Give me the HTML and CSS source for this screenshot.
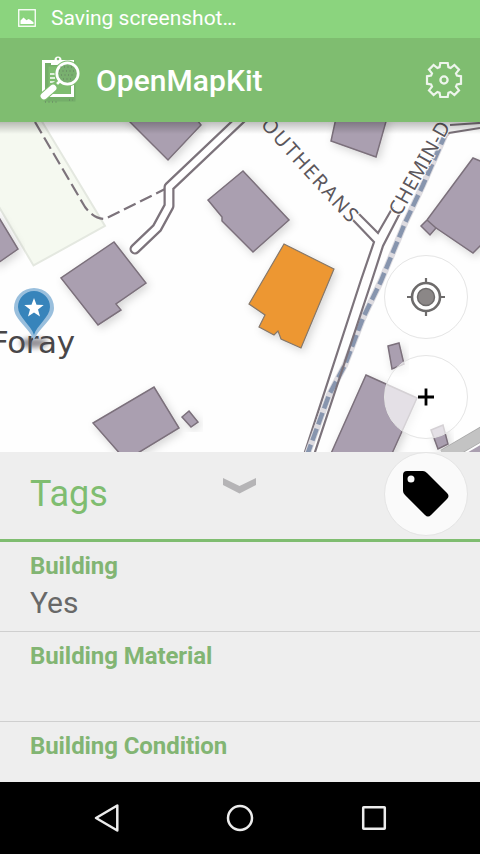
FILE: index.html
```html
<!DOCTYPE html>
<html lang="en">
<head>
<meta charset="utf-8">
<title>OpenMapKit</title>
<link rel="stylesheet" href="styles.css">
</head>
<body>
<div class="screen">
  <div class="status">
    <svg width="18" height="18" viewBox="0 0 18 18"><rect x=".75" y=".75" width="16.5" height="16.5" fill="none" stroke="#fff" stroke-width="1.3"/><path d="M2.5 15v-3.5L5.5 8.500l3 2.700 2-1.200 2 1 3 2.200V15z" fill="#fff"/></svg>
    <span class="status-text">Saving screenshot…</span>
  </div>
  <header class="appbar">
    <svg class="logo" width="44" height="54" viewBox="38 52 44 54">
      <path d="M46 63h27v35H46z" fill="none" stroke="#4d7351" stroke-opacity=".2" stroke-width="5"/>
      <path d="M43.500 60.500h29V94.500H43.500z" fill="none" stroke="#fff" stroke-width="3"/>
      <path d="M51 59h3.500a3.500 3.500 0 1 1 7 0H65v5H51z" fill="#fff"/>
      <circle cx="58" cy="58" r="1.300" fill="#7fbd70"/>
      <path d="M50 73h6M50 77h5M50 81h5" stroke="#fff" stroke-width="1.500"/>
      <path d="M61 79l-7 7" stroke="#7fbd70" stroke-width="7"/>
      <circle cx="67.500" cy="72.500" r="13" fill="#7fbd70"/>
      <circle cx="67.500" cy="72.500" r="10.700" fill="#79b06f" stroke="#fff" stroke-width="2.700"/>
      <path d="M60.500 66h14M59 70h16M61 74h13M63 78h8" stroke="#637a61" stroke-width="1" stroke-dasharray="1 2.500"/>
      <path d="M60 80l-5 5" stroke="#fff" stroke-width="2.500"/>
      <path d="M54 86L43.500 95.500" stroke="#7fbd70" stroke-width="9" stroke-linecap="round"/>
      <path d="M53 87L44 95" stroke="#fff" stroke-width="6.800" stroke-linecap="round"/>
      <path d="M45 101h13M69 99h4" stroke="#637a61" stroke-width="1" stroke-dasharray="1 2.500"/>
    </svg>
    <h1 class="app-title">OpenMapKit</h1>
    <svg class="gear" width="38" height="38" viewBox="-19 -19 38 38" fill="none" stroke="#eef5ec" stroke-width="2.200">
      <path d="M-3.700-17H3.700L4.400-12.900 6.600-12 10.400-15 15-10.400 12-6.600 12.900-4.400 17-3.700V3.700L12.900 4.400 12 6.600 15 10.400 10.400 15 6.600 12 4.400 12.900 3.700 17H-3.700L-4.400 12.900-6.600 12-10.400 15-15 10.400-12 6.600-12.900 4.400-17 3.700V-3.700L-12.900-4.400-12-6.600-15-10.400-10.400-15-6.600-12-4.400-12.900z"/>
      <circle r="3.600" stroke-width="2.300"/>
    </svg>
  </header>
  <main class="map">
    <svg class="map-canvas" width="480" height="330" viewBox="0 122 480 330">
      <defs>
        <filter id="shade" x="-30%" y="-30%" width="160%" height="160%"><feDropShadow dx="2.500" dy="3" stdDeviation="4.500" flood-color="#000" flood-opacity=".16"/></filter>
        <filter id="soft" x="-50%" y="-50%" width="200%" height="200%"><feGaussianBlur stdDeviation="2.500"/></filter>
        <linearGradient id="fade" x1="0" y1="0" x2="0" y2="1"><stop offset="0" stop-color="#000" stop-opacity=".25"/><stop offset="1" stop-color="#000" stop-opacity="0"/></linearGradient>
        <path id="road-a" d="M260 125Q306 177 350 224"/>
        <path id="road-b" d="M400 217L460 110"/>
      </defs>
      <path d="M-5 200V110H35L105 226 33.500 265.500z" fill="#f5f9f0" stroke="#e4e8e0" stroke-width="2"/>
      <g fill="none" stroke="#7c737b" stroke-width="2.200">
        <path d="M35 122L85 207Q94 219 105 219L165 189" stroke-dasharray="13 5"/>
        <path d="M246 114L169 187V206L157 228 135 249" stroke-width="11" stroke-linecap="round" stroke-linejoin="round"/>
        <path d="M246 114L169 187V206L157 228 135 249" stroke="#fff" stroke-width="6.500" stroke-linecap="round" stroke-linejoin="round"/>
        <path d="M352 219L374 242 361 280 303 458M357 212L378 233 393 207"/>
        <path d="M480 123L450 125M480 128L449 133L444 139"/>
      </g>
      <path d="M446 133L423 185 405 223 381 281 363 318 345 365 329 395 306 458" fill="none" stroke="#dddbe0" stroke-width="6.500"/>
      <path d="M446 133L423 185 405 223 381 281 363 318 345 365 329 395 306 458" fill="none" stroke="#8795ae" stroke-width="4.500" stroke-dasharray="12.500 4.500"/>
      <path d="M400 213L383 246 372 280 313 458" fill="none" stroke="#7c737b" stroke-width="2.200"/>
      <g fill="#aa9fb0" stroke="#7b707b" stroke-width="1.500">
        <path filter="url(#shade)" d="M124 116L168 160 201 125 194 116z"/>
        <path filter="url(#shade)" d="M336 118L331 141 376 157 387 118z"/>
        <path filter="url(#shade)" d="M243 171L289 220 253 252 222 221V217L208 200z"/>
        <path filter="url(#shade)" d="M-5 211L18 249-5 265z"/>
        <path filter="url(#shade)" d="M114 242L146 283 116 304 121 310 98 325 61 278z"/>
        <path filter="url(#shade)" d="M154 387L179 428 133 456H122L93 423z"/>
        <path filter="url(#shade)" d="M189 411L198 422 191 427 182 417z"/>
        <path filter="url(#shade)" d="M485 163L473 158 427 220 421 226 430 235 436 228 473 253 485 241z"/>
        <path d="M427 220L436 228" fill="none"/>
        <path filter="url(#shade)" d="M366 375L417 398 390 458H329z"/>
        <path filter="url(#shade)" d="M388 346L399 343 404 364 392 369z"/>
        <path filter="url(#shade)" d="M431 430L443 425 448 444 438 449z"/>
        <path d="M465 454L482 444V454z" stroke="none"/>
      </g>
      <path d="M444 456L485 432" stroke="#a7a7a7" stroke-width="14"/>
      <path d="M444 456L485 432" stroke="#c3c3c3" stroke-width="12.500"/>
      <path filter="url(#shade)" d="M284 244L334 269 301 348 281 339 278 331 274 335 259 327 265 315 249 304z" fill="#ed9730" stroke="#85776a" stroke-width="1.200"/>
      <g class="road-name">
        <text><textPath href="#road-a" textLength="133">OUTHERANS</textPath></text>
        <text><textPath href="#road-b" textLength="104">CHEMIN-D</textPath></text>
      </g>
      <text class="place-name" x="-9" y="353" textLength="84">Foray</text>
      <ellipse cx="34" cy="343" rx="14" ry="5" fill="#4e4853" opacity=".6" filter="url(#soft)"/>
      <path d="M34 341C31 329 14 320 14 308A20 20 0 0 1 54 308C54 320 37 329 34 341z" fill="#99bfdd"/>
      <path d="M34 335C31 325 18 317 18 307A16 16 0 0 1 50 307C50 317 37 325 34 335z" fill="#3784bb"/>
      <path d="M34 298L36.500 304.700 43.700 305 38 309.400 40 316.400 34 312.400 28 316.400 30 309.400 24.300 305 31.500 304.700z" fill="#fff"/>
      <rect x="0" y="122" width="480" height="12" fill="url(#fade)"/>
    </svg>
    <div class="controls">
      <button class="round" aria-label="Locate">
        <svg width="40" height="40" viewBox="-20 -20 40 40" fill="none" stroke="#6d6b6b" stroke-width="2.600"><circle r="14"/><circle r="8.500" fill="#8b8787" stroke-width="1.500"/><path d="M0-19v6M0 19v-6M-19 0h6M19 0h-6" stroke-width="2.200"/></svg>
      </button>
      <button class="round" aria-label="Zoom in">
        <svg width="16" height="18" viewBox="-8 -9 16 18"><path d="M0-8.500V8.500M-8 0H8" stroke="#000" stroke-width="2.800"/></svg>
      </button>
      <button class="round" aria-label="Tags">
        <svg width="46" height="46" viewBox="0 0 46 46"><path fill="#000" fill-rule="evenodd" d="M4 0H20Q22 0 24 2L44 22Q47 25 44 28L28 44Q25 47 22 44L2 24Q0 22 0 20V4Q0 0 4 0zM8 4.500a3.500 3.500 0 1 0 0 7a3.500 3.500 0 1 0 0-7z"/></svg>
      </button>
    </div>
  </main>
  <section class="panel">
    <div class="panel-head">
      <h2 class="panel-title">Tags</h2>
      <svg class="chevron" width="33" height="16" viewBox="0 0 33 16"><path d="M0 0L16.500 8 33 0V7L16.500 15.500 0 7z" fill="#b5b4b6"/></svg>
    </div>
    <div class="tag"><div class="key">Building</div><div class="value">Yes</div></div>
    <div class="tag"><div class="key">Building Material</div></div>
    <div class="tag last"><div class="key">Building Condition</div></div>
  </section>
  <nav class="navbar">
    <svg width="26" height="30" viewBox="0 0 26 30"><path d="M3 15L24.300 2.500V27.500z"/></svg>
    <svg width="28" height="28" viewBox="0 0 28 28"><circle cx="14" cy="14" r="12"/></svg>
    <svg width="26" height="26" viewBox="0 0 26 26"><rect x="2.200" y="2.200" width="21.600" height="21.600" rx=".5"/></svg>
  </nav>
</div>
</body>
</html>
```
FILE: styles.css
```css
* { box-sizing: border-box; }
body { margin: 0; font-family: Roboto, "Liberation Sans", sans-serif; }
h1, h2 { margin: 0; }
.screen { width: 480px; height: 854px; display: flex; flex-direction: column; overflow: hidden; background: #eee; }
.status { height: 38px; flex: none; display: flex; align-items: center; gap: 15px; padding: 0 18px 2px; background: #8bd47e; color: #fff; }
.status-text { font-size: 21px; line-height: 36px; white-space: nowrap; }
.appbar { height: 84px; flex: none; display: flex; align-items: center; padding: 0 17px 0 38px; background: #7fbd70; color: #fff; }
.logo { margin-right: 14px; }
.app-title { flex: 1; font-size: 30px; font-weight: 500; line-height: 40px; letter-spacing: .05px; padding-top: 2px; }
.map { position: relative; height: 330px; flex: none; background: #fefefe; }
.map-canvas { display: block; }
.road-name { font: 20px "Noto Sans", sans-serif; fill: #5c575c; stroke: #fff; stroke-width: 2px; paint-order: stroke; }
.place-name { font: 31px "DejaVu Sans", sans-serif; fill: #484648; }
.controls { position: absolute; top: 133px; right: 12px; z-index: 1; display: flex; flex-direction: column; gap: 16px; }
.round { width: 84px; height: 84px; padding: 0; display: flex; align-items: center; justify-content: center; border: 1.5px solid #e5e5e5; border-radius: 50%; background: rgba(255, 255, 255, .68); }
.round:last-child { margin-top: -3px; background: #fafafa; }
.panel { flex: 1; min-height: 0; overflow: hidden; background: #eee; }
.panel-head { height: 90px; display: grid; grid-template-columns: 193px 33px; padding: 0 30px; border-bottom: 3px solid #7fbd70; }
.panel-title { font-size: 36px; font-weight: 400; line-height: 84px; height: 87px; color: #7fbd70; }
.chevron { margin-top: 26px; }
.tag { height: 90px; padding: 8px 30px 0; border-bottom: 1px solid #cfcfcf; }
.last { border-bottom: 0; }
.key { font-size: 24px; font-weight: 700; line-height: 32px; letter-spacing: -.08px; color: #82b573; }
.value { font-size: 30px; line-height: 42px; color: #686868; }
.navbar { height: 72px; flex: none; display: flex; align-items: center; justify-content: space-between; padding: 0 93px; background: #000; }
.navbar svg { fill: none; stroke: #ececec; stroke-width: 2.5; stroke-linejoin: round; }
```
